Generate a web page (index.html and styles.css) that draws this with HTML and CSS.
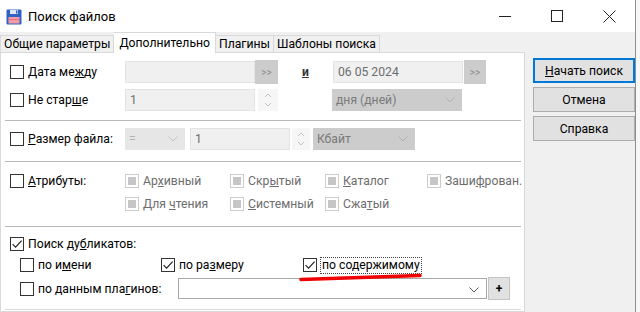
FILE: index.html
```html
<!DOCTYPE html>
<html lang="ru">
<head>
    <meta charset="UTF-8">
    <meta name="viewport" content="width=device-width, initial-scale=1.0">
    <title>Поиск файлов</title>
    <link rel="stylesheet" href="styles.css">
</head>
<body>
<div class="ventana">
    <!-- Barra de titulo -->
    <div class="barra_titulo">
        <svg class="icono" viewBox="0 0 16 16">
            <rect x="0.5" y="0.5" width="15" height="15" rx="1" fill="#2f62c2"/>
            <rect x="4" y="1" width="8" height="4" fill="#dfe8f8"/>
            <rect x="10" y="1.5" width="1.4" height="3" fill="#2f62c2"/>
            <rect x="2.5" y="8" width="11" height="6.5" fill="#f29aa6"/>
            <rect x="2.5" y="10" width="11" height="1" fill="#e2707f"/>
        </svg>
        <span class="titulo_texto">Поиск файлов</span>
        <div class="controles">
            <span class="control">
                <svg width="12" height="12" viewBox="0 0 12 12"><path d="M0 6.5H12" stroke="#222" stroke-width="1"/></svg>
            </span>
            <span class="control">
                <svg width="12" height="12" viewBox="0 0 12 12"><rect x="0.5" y="0.5" width="11" height="11" fill="none" stroke="#222" stroke-width="1"/></svg>
            </span>
            <span class="control">
                <svg width="13" height="13" viewBox="0 0 13 13"><path d="M0.5 0.5L12.5 12.5M12.5 0.5L0.5 12.5" stroke="#222" stroke-width="1"/></svg>
            </span>
        </div>
    </div>

    <div class="cuerpo">
        <div class="columna_izq">
            <!-- Pestanas -->
            <div class="pestanas">
                <div class="pestana ancho_t1">Общие параметры</div>
                <div class="pestana activa">Дополнительно</div>
                <div class="pestana">Плагины</div>
                <div class="pestana">Шаблоны поиска</div>
            </div>

            <div class="panel">
                <!-- Fechas -->
                <div class="seccion seccion_fecha">
                    <div class="fila">
                        <label class="etiqueta"><span class="caja"></span><span>Дата ме<u>ж</u>ду</span></label>
                        <span class="campo ancho_130"></span>
                        <span class="boton_flechas">&gt;&gt;</span>
                        <span class="letra_i"><u>и</u></span>
                        <span class="campo campo_fecha">06 05 2024</span>
                        <span class="boton_flechas flechas_2">&gt;&gt;</span>
                    </div>
                    <div class="fila">
                        <label class="etiqueta"><span class="caja"></span><span>Не стар<u>ш</u>е</span></label>
                        <span class="campo ancho_130">1</span>
                        <span class="giro">
                            <svg width="8" height="18" viewBox="0 0 8 18"><path d="M1 6L4 3L7 6M1 12L4 15L7 12" fill="none" stroke="#c4c4c4" stroke-width="1"/></svg>
                        </span>
                        <span class="lista lista_dias">дня (дней)
                            <svg class="flecha" width="10" height="6" viewBox="0 0 10 6"><path d="M0.5 0.5L5 5L9.5 0.5" fill="none" stroke="#b0b0b0" stroke-width="1"/></svg>
                        </span>
                    </div>
                </div>

                <!-- Tamano -->
                <div class="seccion seccion_tamano">
                    <div class="fila">
                        <label class="etiqueta"><span class="caja"></span><span><u>Р</u>азмер файла:</span></label>
                        <span class="lista lista_igual">=
                            <svg class="flecha" width="10" height="6" viewBox="0 0 10 6"><path d="M0.5 0.5L5 5L9.5 0.5" fill="none" stroke="#c4c4c4" stroke-width="1"/></svg>
                        </span>
                        <span class="campo ancho_100">1</span>
                        <span class="giro giro_chico">
                            <svg width="8" height="18" viewBox="0 0 8 18"><path d="M1 6L4 3L7 6M1 12L4 15L7 12" fill="none" stroke="#c4c4c4" stroke-width="1"/></svg>
                        </span>
                        <span class="lista lista_kb">Кбайт
                            <svg class="flecha" width="10" height="6" viewBox="0 0 10 6"><path d="M0.5 0.5L5 5L9.5 0.5" fill="none" stroke="#b0b0b0" stroke-width="1"/></svg>
                        </span>
                    </div>
                </div>

                <!-- Atributos -->
                <div class="seccion seccion_atributos">
                    <div class="fila_attr">
                        <label class="etiqueta"><span class="caja"></span><span><u>А</u>трибуты:</span></label>
                        <span class="opcion ancho_a1"><span class="caja inactiva"></span><span>Ар<u>х</u>ивный</span></span>
                        <span class="opcion ancho_a2"><span class="caja inactiva"></span><span>Скр<u>ы</u>тый</span></span>
                        <span class="opcion ancho_a3"><span class="caja inactiva"></span><span><u>К</u>аталог</span></span>
                        <span class="opcion"><span class="caja inactiva"></span><span>Заши<u>ф</u>рован.</span></span>
                    </div>
                    <div class="fila_attr">
                        <span class="etiqueta"></span>
                        <span class="opcion ancho_a1"><span class="caja inactiva"></span><span>Для <u>ч</u>тения</span></span>
                        <span class="opcion ancho_a2"><span class="caja inactiva"></span><span><u>С</u>истемный</span></span>
                        <span class="opcion ancho_a3"><span class="caja inactiva"></span><span>Сжа<u>т</u>ый</span></span>
                    </div>
                </div>

                <!-- Duplicados -->
                <div class="seccion seccion_duplicados">
                    <div class="fila_dup">
                        <label class="etiqueta_larga"><span class="caja marcada"><svg width="12" height="12" viewBox="0 0 12 12"><path d="M1.6 6.2L4.6 9.2L10.6 2.6" fill="none" stroke="#222" stroke-width="1.2"/></svg></span><span>Поиск ду<u>б</u>ликатов:</span></label>
                    </div>
                    <div class="fila_dup sangria">
                        <label class="opcion ancho_d1"><span class="caja"></span><span>по и<u>м</u>ени</span></label>
                        <label class="opcion ancho_d2"><span class="caja marcada"><svg width="12" height="12" viewBox="0 0 12 12"><path d="M1.6 6.2L4.6 9.2L10.6 2.6" fill="none" stroke="#222" stroke-width="1.2"/></svg></span><span>по ра<u>з</u>меру</span></label>
                        <label class="opcion"><span class="caja marcada"><svg width="12" height="12" viewBox="0 0 12 12"><path d="M1.6 6.2L4.6 9.2L10.6 2.6" fill="none" stroke="#222" stroke-width="1.2"/></svg></span><span class="foco">по содержимому</span></label>
                    </div>
                    <div class="fila_dup fila_plugins sangria">
                        <label class="opcion ancho_d3"><span class="caja"></span><span>по данным пла<u>г</u>инов:</span></label>
                        <span class="combo">
                            <svg class="flecha" width="10" height="6" viewBox="0 0 10 6"><path d="M0.5 0.5L5 5L9.5 0.5" fill="none" stroke="#555" stroke-width="1"/></svg>
                        </span>
                        <span class="boton_mas">+</span>
                    </div>
                </div>
            </div>
        </div>

        <!-- Botones -->
        <div class="columna_der">
            <div class="boton boton_foco"><span><u>Н</u>ачать поиск</span></div>
            <div class="boton">Отмена</div>
            <div class="boton">Справка</div>
        </div>
    </div>

    <!-- marca roja -->
    <svg class="subrayado" width="640" height="312" viewBox="0 0 640 312">
        <path d="M301 279.5Q360 277.5 420 275.5" fill="none" stroke="#f00000" stroke-width="3.6" stroke-linecap="round"/>
    </svg>
</div>
</body>
</html>
```

FILE: styles.css
```css
html, body {
    margin: 0;
    padding: 0;
    width: 100%;
    height: 100%;
    overflow: hidden;
    background-color: #f7f7f7;
}

body {
    font-family: Roboto, "Noto Sans", sans-serif;
    font-size: 12.2px;
    color: #000;
}

u {
    text-underline-offset: 1px;
}

.ventana {
    position: relative;
    width: 635px;
    height: 312px;
    border-right: 1px solid #8f8f8f;
    background-color: #f0f0f0;
    display: flex;
    flex-direction: column;
}

/* Titulo */
.barra_titulo {
    height: 32px;
    flex-shrink: 0;
    background-color: #fff;
    display: flex;
    align-items: center;
}

.icono {
    width: 16px;
    height: 16px;
    margin-left: 6px;
    margin-right: 6px;
    margin-top: 2px;
}

.titulo_texto {
    font-size: 13px;
}

.controles {
    margin-left: auto;
    display: flex;
    height: 100%;
}

.control {
    width: 52px;
    display: flex;
    align-items: center;
    justify-content: center;
}

.cuerpo {
    flex: 1;
    display: flex;
    min-height: 0;
}

.columna_izq {
    width: 525px;
    display: flex;
    flex-direction: column;
}

/* Pestanas */
.pestanas {
    height: 20px;
    flex-shrink: 0;
    display: flex;
    align-items: flex-end;
    position: relative;
    z-index: 1;
}

.pestana {
    height: 17px;
    box-sizing: border-box;
    border: 1px solid #d9d9d9;
    border-bottom: none;
    border-left: none;
    line-height: 16px;
    padding: 0 3px;
    background-color: #f0f0f0;
}

.pestana.activa {
    height: 21px;
    margin-bottom: -1px;
    background-color: #fff;
    line-height: 21px;
    padding: 0 5px;
}

.ancho_t1 {
    border-left: 1px solid #d9d9d9;
}

/* Panel */
.panel {
    flex: 1;
    background-color: #fff;
    border: 1px solid #d9d9d9;
}

.seccion {
    margin: 0 3px 0 4px;
    border-bottom: 1px solid #b9b9b9;
    display: flex;
    flex-direction: column;
    box-sizing: border-box;
}

.seccion_fecha {
    height: 68px;
    padding-top: 7px;
    gap: 4px;
}

.seccion_tamano {
    height: 41px;
    padding-top: 6px;
}

.seccion_atributos {
    height: 65px;
    padding-top: 10px;
    gap: 5px;
}

.seccion_duplicados {
    height: 83px;
    padding-top: 8px;
    gap: 3px;
    border-bottom-color: #dcdcdc;
}

.fila {
    height: 24px;
    display: flex;
    align-items: center;
    padding-left: 5px;
}

.fila_attr, .fila_dup {
    height: 18px;
    display: flex;
    align-items: center;
    padding-left: 5px;
}

.fila_plugins {
    height: 23px;
}

.sangria {
    padding-left: 15px;
}

.etiqueta {
    width: 115px;
    flex-shrink: 0;
    display: flex;
    align-items: center;
}

.etiqueta_larga {
    display: flex;
    align-items: center;
}

/* Casillas */
.caja {
    width: 14px;
    height: 14px;
    box-sizing: border-box;
    border: 1px solid #333;
    background-color: #fff;
    margin-right: 4px;
    flex-shrink: 0;
    display: flex;
    align-items: center;
    justify-content: center;
}

.caja.inactiva {
    border-color: #cccccc;
}

.caja.inactiva::after {
    content: "";
    width: 8px;
    height: 8px;
    background-color: #c6c6c6;
}

.opcion {
    display: flex;
    align-items: center;
    flex-shrink: 0;
}

.fila_attr .opcion {
    color: #6d6d6d;
}

.ancho_a1 { width: 105px; }
.ancho_a2 { width: 95px; }
.ancho_a3 { width: 102px; }
.ancho_d1 { width: 141px; }
.ancho_d2 { width: 142px; }
.ancho_d3 { width: 158px; }

.foco {
    outline: 1px dotted #444;
    outline-offset: 0;
    padding: 0 1px;
    line-height: 15px;
}

/* Campos */
.campo {
    height: 22px;
    box-sizing: border-box;
    background-color: #f0f0f0;
    border: 1px solid #e3e3e3;
    color: #6d6d6d;
    padding-left: 4px;
    line-height: 20px;
    flex-shrink: 0;
}

.ancho_130 { width: 130px; }
.ancho_100 { width: 100px; margin-left: 5px; }

.campo_fecha {
    width: 130px;
    margin-left: 26px;
}

.boton_flechas {
    width: 23px;
    height: 24px;
    background-color: #cccccc;
    color: #8a8a8a;
    font-size: 10px;
    display: flex;
    align-items: center;
    justify-content: center;
    flex-shrink: 0;
}

.flechas_2 {
    width: 22px;
    margin-left: 1px;
}

.letra_i {
    margin-left: 24px;
    margin-right: -2px;
    font-weight: bold;
    color: #333;
}

.giro {
    width: 20px;
    height: 22px;
    margin-left: 3px;
    background-color: #f6f6f6;
    display: flex;
    align-items: center;
    justify-content: center;
}

.giro_chico {
    width: 18px;
    margin-left: 2px;
}

.lista {
    height: 22px;
    box-sizing: border-box;
    background-color: #cccccc;
    color: #7a7a7a;
    padding-left: 4px;
    display: flex;
    align-items: center;
    position: relative;
    flex-shrink: 0;
}

.lista .flecha, .combo .flecha {
    position: absolute;
    right: 7px;
    top: 8px;
}

.lista_dias {
    width: 130px;
    margin-left: 54px;
}

.lista_igual {
    width: 60px;
    background-color: #e6e6e6;
    color: #b0b0b0;
}

.lista_kb {
    width: 102px;
    margin-left: 3px;
}

.combo {
    width: 309px;
    height: 21px;
    box-sizing: border-box;
    border: 1px solid #a8a8a8;
    background-color: #fff;
    position: relative;
}

.boton_mas {
    width: 22px;
    height: 23px;
    margin-left: 1px;
    box-sizing: border-box;
    border: 1px solid #c4c4c4;
    background-color: #e1e1e1;
    font-weight: bold;
    font-size: 12px;
    display: flex;
    align-items: center;
    justify-content: center;
}

/* Botones derecha */
.columna_der {
    flex: 1;
    padding: 26px 0 0 8px;
    display: flex;
    flex-direction: column;
    gap: 4px;
}

.boton {
    width: 102px;
    height: 25px;
    box-sizing: border-box;
    border: 1px solid #adadad;
    background-color: #e1e1e1;
    display: flex;
    align-items: center;
    justify-content: center;
}

.boton_foco {
    border: 2px solid #0078d7;
}

.subrayado {
    position: absolute;
    left: 0;
    top: 0;
    pointer-events: none;
}
```
